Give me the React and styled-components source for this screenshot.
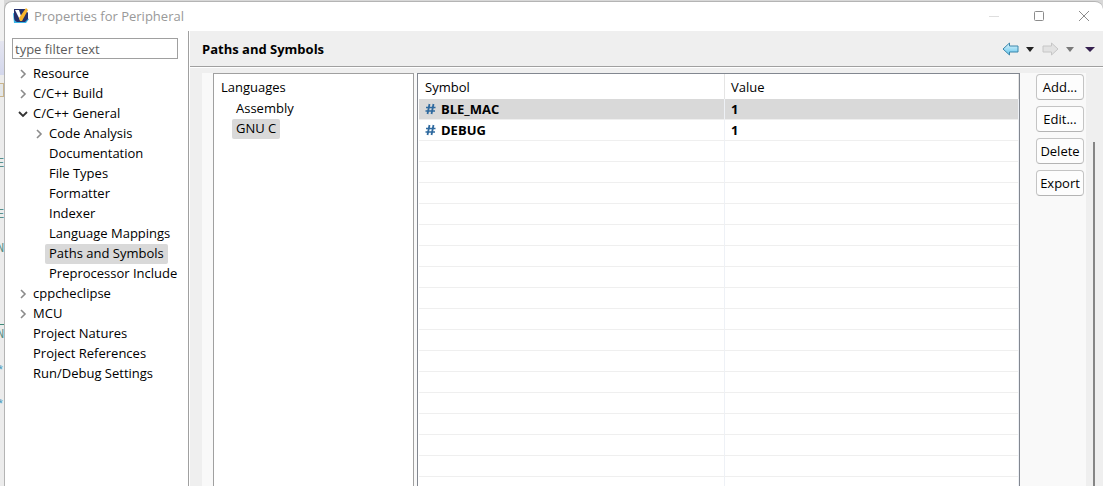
import React, { useState } from 'react';
import styled, { createGlobalStyle } from 'styled-components';

const GlobalStyle = createGlobalStyle`
  * {
    box-sizing: border-box;
  }

  body {
    margin: 0;
    background: #ececec;
    color: #000000;
    font-family: 'Open Sans', 'Noto Sans', sans-serif;
    font-size: 13px;
    line-height: 20px;
    overflow: hidden;
  }

  button,
  input {
    font: inherit;
    color: inherit;
  }
`;

const Desktop = styled.div`
  display: flex;
  height: 100vh;
  padding-top: 1px;
  background: #d8d8d8;
`;

const EditorEdge = styled.div`
  flex: none;
  display: flex;
  flex-direction: column;
  width: 4px;
  margin-top: -1px;
  background: #ececec;
  overflow: hidden;
`;

const EdgeBlock = styled.div`
  flex: none;
  height: ${(props) => props.$height}px;
  background: ${(props) => props.$fill || 'transparent'};
`;

const EdgeTool = styled(EdgeBlock)`
  border: 1px solid #c9b48c;
  border-left: 0;
`;

const EdgeChar = styled.span`
  flex: none;
  height: ${(props) => props.$height}px;
  margin-left: -3px;
  color: ${(props) => props.$color || '#5a9088'};
  font-family: 'Liberation Mono', monospace;
  font-size: 12px;
  line-height: 14px;
`;

const Dialog = styled.div`
  flex: 1;
  min-width: 0;
  display: flex;
  flex-direction: column;
  border-left: 1px solid #b4b4b4;
  border-top: 1px solid #b4b4b4;
  border-radius: 8px 8px 0 0;
  background: #ffffff;
  overflow: hidden;
`;

const TitleBar = styled.header`
  flex: none;
  display: flex;
  align-items: center;
  height: 29px;
  padding: 0 13px 2px 8px;
`;

const Title = styled.h1`
  flex: 1;
  margin: 0 0 0 4px;
  color: #999999;
  font-size: 13px;
  font-weight: 400;
`;

const WindowButtons = styled.div`
  display: flex;
  gap: 33px;
`;

const IconButton = styled.button`
  display: flex;
  padding: 0;
  border: 0;
  background: transparent;
`;

const Body = styled.div`
  flex: 1;
  min-height: 0;
  display: flex;
`;

const Sidebar = styled.nav`
  flex: none;
  width: 184px;
  padding: 7px 10px 0 7px;
  border-right: 1px solid #a0a0a0;
`;

const Filter = styled.input`
  display: block;
  width: 100%;
  height: 21px;
  padding: 0 2px;
  border: 1px solid #a0a0a0;
  outline: 0;
  background: #ffffff;

  &::placeholder {
    color: #5c5c5c;
    opacity: 1;
  }
`;

const Tree = styled.ul`
  margin: 5px 0 0;
  padding: 0;
  list-style: none;
`;

const TreeItem = styled.li`
  display: flex;
  align-items: center;
  height: 20px;
  padding-left: ${(props) => (props.$nested ? 20 : 4)}px;
  white-space: nowrap;
`;

const Twistie = styled.span`
  flex: none;
  display: flex;
  justify-content: center;
  width: 13px;
`;

const Label = styled.button`
  height: 20px;
  padding: 0 4px;
  border: 0;
  border-radius: 2px;
  background: ${(props) => (props.$selected ? '#d9d9d9' : 'transparent')};
  line-height: 18px;
  padding-bottom: 2px;
  text-align: left;
  white-space: nowrap;
`;

const Page = styled.main`
  flex: 1;
  min-width: 0;
  display: flex;
  flex-direction: column;
  margin-left: 1px;
  background: #efefef;
`;

const PageHeader = styled.div`
  flex: none;
  display: flex;
  align-items: center;
  justify-content: space-between;
  height: 36px;
  padding: 1px 8px 0 12px;
  border-bottom: 1px solid #a0a0a0;
`;

const PageTitle = styled.h2`
  margin: 0;
  font-size: 13px;
  font-weight: 700;
`;

const History = styled.div`
  display: flex;
  align-items: center;
`;

const MenuArrow = styled(IconButton)`
  margin: 0 ${(props) => props.$after || 0}px 0 ${(props) => props.$before}px;
`;

const Content = styled.div`
  flex: 1;
  min-height: 0;
  display: flex;
  padding: 5px 8px 0 12px;
  border-top: 1px solid #ffffff;
`;

const Settings = styled.div`
  flex: 1;
  min-width: 0;
  display: flex;
  padding: 0 2px 0 11px;
  background: #f9f9f9;
`;

const Languages = styled.section`
  flex: none;
  width: 201px;
  margin-right: 3px;
  padding: 3px 0 0 18px;
  border: 1px solid #a0a0a0;
  border-bottom: 0;
  background: #ffffff;
`;

const LanguagesTitle = styled.h3`
  margin: 0 0 2px -11px;
  font-size: 13px;
  font-weight: 400;
`;

const LanguageRow = styled.div`
  display: flex;
`;

const SymbolsFrame = styled.div`
  flex: 1;
  min-width: 0;
  padding-left: 1px;
  border: 1px solid #828790;
  border-bottom: 0;
  background: #ffffff;
  overflow: hidden;
`;

const Symbols = styled.table`
  width: 100%;
  border-collapse: separate;
  border-spacing: 0;
  table-layout: fixed;
`;

const HeadCell = styled.th`
  width: ${(props) => props.$width};
  height: 25px;
  padding: 0 6px;
  border-right: 1px solid #e5e5e5;
  font-weight: 400;
  line-height: 20px;
  text-align: left;
`;

const Row = styled.tr`
  background: ${(props) => (props.$selected ? '#d9d9d9' : '#ffffff')};
`;

const Cell = styled.td`
  height: 21px;
  padding: 0 6px;
  border-right: 1px solid #eef1f6;
  border-bottom: 1px solid #efefef;
  font-weight: 700;
  line-height: 20px;
`;

const SymbolName = styled.span`
  display: flex;
  align-items: center;
  gap: 5px;
`;

const Actions = styled.div`
  flex: none;
  display: flex;
  flex-direction: column;
  gap: 6px;
  margin-left: 16px;
  padding-top: 1px;
`;

const ActionButton = styled.button`
  width: 48px;
  height: 26px;
  padding: 0 0 1px;
  border: 1px solid #c4c4c4;
  border-bottom-color: #b4b4b4;
  border-radius: 4px;
  background: #fdfdfd;
  line-height: 20px;
  white-space: nowrap;
`;

const ScrollTrack = styled.div`
  flex: none;
  width: 9px;
  padding: 69px 0 0 7px;
`;

const ScrollThumb = styled.div`
  width: 2px;
  height: 100%;
  background: #858585;
`;

const treeItems = [
  { label: 'Resource', twistie: 'closed' },
  { label: 'C/C++ Build', twistie: 'closed' },
  { label: 'C/C++ General', twistie: 'open' },
  { label: 'Code Analysis', twistie: 'closed', nested: true },
  { label: 'Documentation', nested: true },
  { label: 'File Types', nested: true },
  { label: 'Formatter', nested: true },
  { label: 'Indexer', nested: true },
  { label: 'Language Mappings', nested: true },
  { label: 'Paths and Symbols', nested: true },
  { label: 'Preprocessor Include', nested: true },
  { label: 'cppcheclipse', twistie: 'closed' },
  { label: 'MCU', twistie: 'closed' },
  { label: 'Project Natures' },
  { label: 'Project References' },
  { label: 'Run/Debug Settings' },
];

const symbols = [
  { name: 'BLE_MAC', value: '1' },
  { name: 'DEBUG', value: '1' },
];

const EMPTY_ROWS = 17;

const AppLogo = () => (
  <svg width="17" height="16" viewBox="0 0 17 16" aria-hidden="true">
    <path d="M0 5 L1 15 L13 15 L16 11 Z" fill="#39b4e6" />
    <path d="M1 1 H12 L15 5 V11 L12 14 H4 Q1 13 1 9 Z" fill="#25306b" />
    <path d="M2 2 L6 2 L8 8 L7 12 Z" fill="#ffffff" />
    <path d="M6 10 L13 0 L15 2 L9 13 L7 13 Z" fill="#f7b52c" />
  </svg>
);

const Chevron = ({ open }) => (
  <svg width="10" height="10" viewBox="0 0 10 10" fill="none" aria-hidden="true">
    {open
      ? <path d="M1 3 L5 7 L9 3" stroke="#333333" strokeWidth="1.8" />
      : <path d="M3 1 L7 5 L3 9" stroke="#8c8c8c" strokeWidth="1.6" />}
  </svg>
);

const HistoryArrow = ({ forward }) => (
  <svg width="17" height="14" viewBox="0 0 17 14" aria-hidden="true">
    <defs>
      <linearGradient id="backFill" x1="0" y1="0" x2="0" y2="1">
        <stop offset="0" stopColor="#e4f7fd" />
        <stop offset="1" stopColor="#5cc3ec" />
      </linearGradient>
    </defs>
    <path
      d={forward
        ? 'M16 7 L9.5 1 L9.5 4 L1 4 L1 10 L9.5 10 L9.5 13 Z'
        : 'M1 7 L7.5 1 L7.5 4 L16 4 L16 10 L7.5 10 L7.5 13 Z'}
      fill={forward ? '#e2e2e2' : 'url(#backFill)'}
      stroke={forward ? '#c6c6c6' : '#3c87ab'}
      strokeLinejoin="round"
    />
  </svg>
);

const DownArrow = ({ color, width = 8 }) => (
  <svg width={width} height="5" viewBox="0 0 8 5" preserveAspectRatio="none" aria-hidden="true">
    <path d="M0 0 L8 0 L4 5 Z" fill={color} />
  </svg>
);

const HashIcon = () => (
  <svg width="11" height="12" viewBox="0 0 11 12" fill="none" stroke="#2f6a9f" aria-hidden="true">
    <path d="M4.5 1 L2.5 11 M8.5 1 L6.5 11" strokeWidth="1.8" />
    <path d="M1 4.5 L10.5 4.5 M0.5 8 L10 8" strokeWidth="1.5" />
  </svg>
);

function App() {
  const [page, setPage] = useState('Paths and Symbols');
  const [language, setLanguage] = useState('GNU C');
  const [symbol, setSymbol] = useState('BLE_MAC');

  return (
    <>
      <GlobalStyle />
      <Desktop>
        <EditorEdge aria-hidden="true">
          <EdgeBlock $height={41} $fill="#f0f0f0" />
          <EdgeBlock $height={34} $fill="linear-gradient(#e4e5f0, #d3d7ec)" />
          <EdgeBlock $height={8} />
          <EdgeTool $height={14} $fill="#e3e6e8" />
          <EdgeBlock $height={60} />
          <EdgeChar $height={51}>E</EdgeChar>
          <EdgeChar $height={34}>E</EdgeChar>
          <EdgeChar $height={82}>N</EdgeChar>
          <EdgeBlock $height={1} $fill="#3d8a78" />
          <EdgeBlock $height={3} />
          <EdgeChar $height={36}>N</EdgeChar>
          <EdgeChar $height={34} $color="#4a9cc0">*</EdgeChar>
          <EdgeChar $height={34} $color="#4a9cc0">*</EdgeChar>
        </EditorEdge>
        <Dialog role="dialog" aria-label="Properties for Peripheral">
          <TitleBar>
            <AppLogo />
            <Title>Properties for Peripheral</Title>
            <WindowButtons>
              <IconButton aria-label="Minimize" disabled>
                <svg width="12" height="12" viewBox="0 0 12 12">
                  <path d="M1 6.5 H11" stroke="#dedede" />
                </svg>
              </IconButton>
              <IconButton aria-label="Maximize">
                <svg width="12" height="12" viewBox="0 0 12 12" fill="none">
                  <rect x="1.5" y="1.5" width="9" height="9" rx="1" stroke="#8c8c8c" />
                </svg>
              </IconButton>
              <IconButton aria-label="Close">
                <svg width="12" height="12" viewBox="0 0 12 12">
                  <path d="M1 1 L11 11 M11 1 L1 11" stroke="#8c8c8c" />
                </svg>
              </IconButton>
            </WindowButtons>
          </TitleBar>
          <Body>
            <Sidebar>
              <Filter type="text" placeholder="type filter text" aria-label="Filter" />
              <Tree>
                {treeItems.map((item) => (
                  <TreeItem key={item.label} $nested={item.nested}>
                    <Twistie>
                      {item.twistie && <Chevron open={item.twistie === 'open'} />}
                    </Twistie>
                    <Label $selected={page === item.label} onClick={() => setPage(item.label)}>
                      {item.label}
                    </Label>
                  </TreeItem>
                ))}
              </Tree>
            </Sidebar>
            <Page>
              <PageHeader>
                <PageTitle>Paths and Symbols</PageTitle>
                <History>
                  <IconButton aria-label="Back"><HistoryArrow /></IconButton>
                  <MenuArrow $before={7} $after={8} aria-label="Back history">
                    <DownArrow color="#222222" />
                  </MenuArrow>
                  <IconButton aria-label="Forward" disabled><HistoryArrow forward /></IconButton>
                  <MenuArrow $before={7} aria-label="Forward history" disabled>
                    <DownArrow color="#7a7a7a" />
                  </MenuArrow>
                  <MenuArrow $before={11} aria-label="Menu">
                    <DownArrow color="#35204f" width={10} />
                  </MenuArrow>
                </History>
              </PageHeader>
              <Content>
                <Settings>
                  <Languages>
                    <LanguagesTitle>Languages</LanguagesTitle>
                    {['Assembly', 'GNU C'].map((name) => (
                      <LanguageRow key={name}>
                        <Label $selected={language === name} onClick={() => setLanguage(name)}>
                          {name}
                        </Label>
                      </LanguageRow>
                    ))}
                  </Languages>
                  <SymbolsFrame>
                    <Symbols>
                      <thead>
                        <tr>
                          <HeadCell $width="51%">Symbol</HeadCell>
                          <HeadCell $width="49%">Value</HeadCell>
                        </tr>
                      </thead>
                      <tbody>
                        {symbols.map((item) => (
                          <Row
                            key={item.name}
                            $selected={symbol === item.name}
                            onClick={() => setSymbol(item.name)}
                          >
                            <Cell>
                              <SymbolName>
                                <HashIcon />
                                {item.name}
                              </SymbolName>
                            </Cell>
                            <Cell>{item.value}</Cell>
                          </Row>
                        ))}
                        {Array.from({ length: EMPTY_ROWS }, (_, i) => (
                          <Row key={i}>
                            <Cell />
                            <Cell />
                          </Row>
                        ))}
                      </tbody>
                    </Symbols>
                  </SymbolsFrame>
                  <Actions>
                    <ActionButton>Add...</ActionButton>
                    <ActionButton>Edit...</ActionButton>
                    <ActionButton>Delete</ActionButton>
                    <ActionButton>Export</ActionButton>
                  </Actions>
                </Settings>
                <ScrollTrack>
                  <ScrollThumb />
                </ScrollTrack>
              </Content>
            </Page>
          </Body>
        </Dialog>
      </Desktop>
    </>
  );
}

export default App;
